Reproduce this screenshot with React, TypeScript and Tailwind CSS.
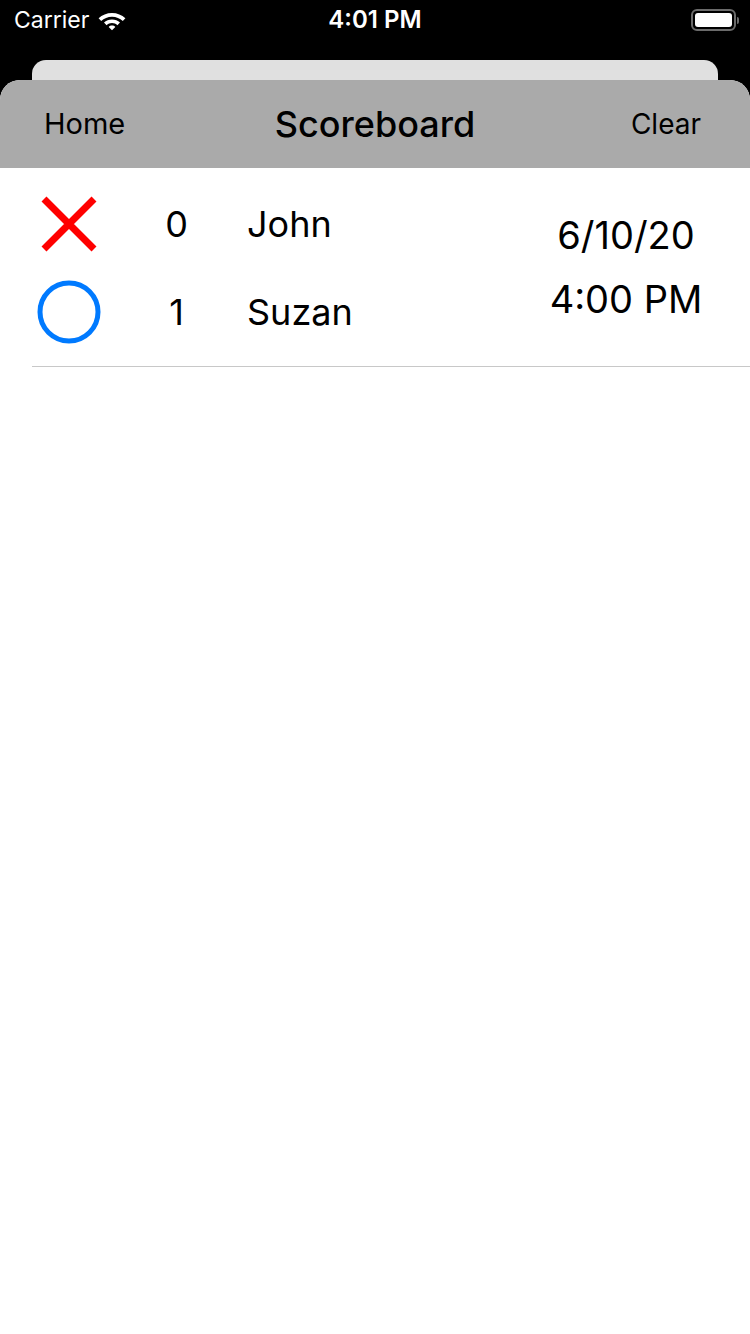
function Wifi() {
  return (
    <svg width="30" height="22" viewBox="0 0 30 22">
      <path d="M15 4C9.8 4 5.1 6 1.6 9.3l2.6 2.7C7 9.3 10.8 7.7 15 7.7s8 1.6 10.8 4.3l2.6-2.7C24.9 6 20.2 4 15 4z" fill="white" />
      <path d="M15 10.4c-3.1 0-5.9 1.2-8 3.2l2.6 2.7c1.4-1.3 3.3-2.2 5.4-2.2s4 .9 5.4 2.2l2.6-2.7c-2.1-2-4.9-3.2-8-3.2z" fill="white" />
      <path d="M15 16.6c-1.3 0-2.5.5-3.3 1.3L15 21.3l3.3-3.4c-.8-.8-2-1.3-3.3-1.3z" fill="white" />
    </svg>
  )
}

function Battery() {
  return (
    <div className="flex items-center">
      <div className="w-[45px] h-[22px] rounded-[6px] border-2 border-[#6b6b6b] p-[2px]">
        <div className="w-full h-full rounded-[3px] bg-white" />
      </div>
      <div className="w-[2px] h-[7px] rounded-r-sm bg-[#6b6b6b] ml-[1px]" />
    </div>
  )
}

function XMark() {
  return (
    <svg width="58" height="58" viewBox="0 0 58 58">
      <path d="M4 4L54 54M54 4L4 54" stroke="#ff0000" strokeWidth="7" />
    </svg>
  )
}

function OMark() {
  return (
    <svg width="64" height="64" viewBox="0 0 64 64">
      <circle cx="32" cy="32" r="29" fill="none" stroke="#007aff" strokeWidth="5" />
    </svg>
  )
}

export default function App() {
  return (
    <div className="w-[750px] h-[1334px] bg-black flex flex-col font-['Inter',sans-serif] overflow-hidden">
      <div className="h-[40px] flex items-center justify-between px-[14px] text-white relative">
        <div className="flex items-center gap-[8px]">
          <span className="text-[23px]">Carrier</span>
          <Wifi />
        </div>
        <span className="absolute left-0 right-0 text-center text-[24px] font-semibold">4:01 PM</span>
        <div className="-mr-[3px]">
          <Battery />
        </div>
      </div>
      <div className="mt-[20px] mx-[32px] h-[20px] bg-[#e0e0e0] rounded-t-[14px]" />
      <div className="flex-1 bg-white rounded-t-[20px] overflow-hidden flex flex-col">
        <div className="h-[88px] bg-[#aaaaaa] flex items-center justify-between px-[44px] pr-[49px] relative">
          <span className="text-[29px] text-black">Home</span>
          <span className="absolute left-0 right-0 text-center text-[36px] font-medium text-black">Scoreboard</span>
          <span className="text-[28px] text-black">Clear</span>
        </div>
        <div className="ml-[32px] border-b border-[#c8c8c8] flex items-center pt-[26px] pb-[14px]">
          <div className="flex flex-col">
            <div className="flex items-center h-[60px]">
              <div className="w-[74px] flex justify-center">
                <XMark />
              </div>
              <span className="w-[141px] text-center text-[36px] text-black">0</span>
              <span className="text-[36px] text-black">John</span>
            </div>
            <div className="flex items-center h-[80px] mt-[18px]">
              <div className="w-[74px] flex justify-center">
                <OMark />
              </div>
              <span className="w-[141px] text-center text-[36px] text-black">1</span>
              <span className="text-[36px] text-black">Suzan</span>
            </div>
          </div>
          <div className="ml-auto w-[170px] mr-[39px] mb-[12px] flex flex-col items-center text-[38px] text-black leading-[64px]">
            <span>6/10/20</span>
            <span>4:00 PM</span>
          </div>
        </div>
      </div>
    </div>
  )
}
